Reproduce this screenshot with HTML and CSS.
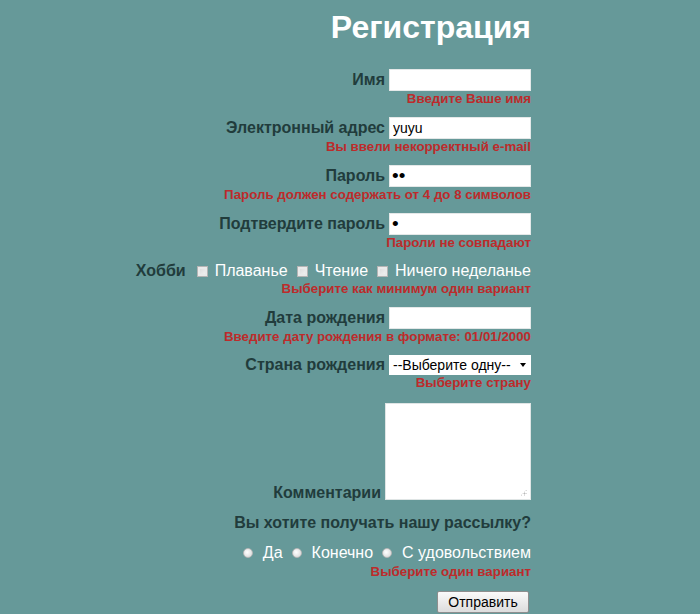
FILE: index.html
```html
<!DOCTYPE html>
<html lang="ru">
<head>
<meta charset="utf-8">
<title>Регистрация</title>
<link rel="stylesheet" href="styles.css">
</head>
<body>
<form class="form">
  <h1 class="title">Регистрация</h1>

  <div class="group">
    <div class="row"><label class="label">Имя</label><input class="field" type="text" value=""></div>
    <div class="error">Введите Ваше имя</div>
  </div>

  <div class="group">
    <div class="row"><label class="label">Электронный адрес</label><input class="field" type="text" value="yuyu"></div>
    <div class="error">Вы ввели некорректный e-mail</div>
  </div>

  <div class="group">
    <div class="row"><label class="label">Пароль</label><input class="field pass" type="password" value="ab"></div>
    <div class="error">Пароль должен содержать от 4 до 8 символов</div>
  </div>

  <div class="group">
    <div class="row"><label class="label">Подтвердите пароль</label><input class="field pass" type="password" value="a"></div>
    <div class="error">Пароли не совпадают</div>
  </div>

  <div class="group">
    <div class="row row-short">
      <span class="label">Хобби</span>
      <input class="check" type="checkbox"><span class="opt">Плаванье</span>
      <input class="check" type="checkbox"><span class="opt">Чтение</span>
      <input class="check" type="checkbox"><span class="opt">Ничего неделанье</span>
    </div>
    <div class="error">Выберите как минимум один вариант</div>
  </div>

  <div class="group">
    <div class="row"><label class="label">Дата рождения</label><input class="field" type="text" value=""></div>
    <div class="error">Введите дату рождения в формате: 01/01/2000</div>
  </div>

  <div class="group">
    <div class="row row-short"><label class="label">Страна рождения</label>
      <div class="select"><span>--Выберите одну--</span><span class="arrow"></span></div>
    </div>
    <div class="error">Выберите страну</div>
  </div>

  <div class="group group-area">
    <div class="row row-area"><label class="label">Комментарии</label>
      <div class="area"><span class="grip"></span></div>
    </div>
  </div>

  <div class="question">Вы хотите получать нашу рассылку?</div>

  <div class="group group-radio">
    <div class="row row-short">
      <input class="radio" type="radio" name="r"><span class="opt">Да</span>
      <input class="radio" type="radio" name="r"><span class="opt">Конечно</span>
      <input class="radio" type="radio" name="r"><span class="opt">С удовольствием</span>
    </div>
    <div class="error error-radio">Выберите один вариант</div>
  </div>

  <button class="submit" type="button">Отправить</button>
</form>
</body>
</html>
```

FILE: styles.css
```css
html, body {
  margin: 0;
  padding: 0;
  background: #669999;
}
body {
  font-family: "Liberation Sans", Arial, sans-serif;
  width: 700px;
  height: 614px;
  overflow: hidden;
}
.form {
  width: 531px;
  display: flex;
  flex-direction: column;
  align-items: flex-end;
}
.title {
  margin: 7px 0 0 0;
  font-size: 32px;
  line-height: 40px;
  font-weight: bold;
  color: #ffffff;
}
.group {
  display: flex;
  flex-direction: column;
  align-items: flex-end;
  margin-top: 11px;
}
.title + .group {
  margin-top: 22px;
}
.row {
  display: flex;
  align-items: center;
  justify-content: flex-end;
  height: 22px;
}
.row-short {
  height: 20px;
}
.label {
  font-size: 16px;
  font-weight: bold;
  color: #213c3c;
  margin-right: 4px;
  white-space: nowrap;
}
.field {
  box-sizing: border-box;
  width: 142px;
  height: 22px;
  margin: 0;
  border: 1px solid #e4e8e8;
  background: #ffffff;
  padding: 0 3px;
  font-family: "Liberation Sans", Arial, sans-serif;
  font-size: 14px;
  color: #000;
  outline: none;
}
.pass {
  font-size: 19px;
  letter-spacing: 0;
  padding-left: 2px;
}
.error {
  font-size: 13.3px;
  line-height: 15px;
  font-weight: bold;
  color: #bd2b2b;
  white-space: nowrap;
}
.error-radio {
  margin-top: 1px;
}
.check {
  appearance: none;
  -webkit-appearance: none;
  box-sizing: border-box;
  width: 11px;
  height: 11px;
  margin: 0 7px 0 9px;
  border: 1px solid #b4b4b4;
  background: linear-gradient(135deg, #d8d8d8, #f6f6f6);
  box-shadow: inset 0 0 0 2px #eaeaea;
}
.row-short .label + .check {
  margin-left: 7px;
}
.opt {
  font-size: 16px;
  color: #ffffff;
  white-space: nowrap;
}
.select {
  box-sizing: border-box;
  width: 142px;
  height: 20px;
  background: #ffffff;
  display: flex;
  align-items: center;
  justify-content: space-between;
  padding: 0 4px 0 4px;
  font-size: 14px;
  color: #000;
}
.arrow {
  width: 0;
  height: 0;
  border-left: 3.5px solid transparent;
  border-right: 3.5px solid transparent;
  border-top: 4px solid #000;
  margin-right: 1px;
}
.group-area {
  margin-top: 13px;
}
.row-area {
  height: 97px;
  align-items: flex-end;
}
.row-area .label {
  line-height: 18px;
  margin-bottom: -2px;
}
.area {
  position: relative;
  box-sizing: border-box;
  width: 146px;
  height: 97px;
  background: #ffffff;
  border: 1px solid #dfe5e5;
}
.grip {
  position: absolute;
  right: 3px;
  bottom: 3px;
  width: 7px;
  height: 7px;
  background:
    radial-gradient(circle, #b8b8b8 0.8px, transparent 1.2px) 0 0 / 3px 3px;
  clip-path: polygon(100% 0, 100% 100%, 0 100%);
}
.question {
  margin-top: 13px;
  font-size: 16px;
  line-height: 20px;
  font-weight: bold;
  color: #213c3c;
  white-space: nowrap;
}
.group-radio {
  margin-top: 10px;
}
.radio {
  appearance: none;
  -webkit-appearance: none;
  box-sizing: border-box;
  width: 10px;
  height: 10px;
  margin: 0 10px 0 9px;
  border-radius: 50%;
  border: 1px solid #b8b8b8;
  background: radial-gradient(circle at 40% 40%, #ffffff, #d4d4d4);
}
.submit {
  margin: 12px 2px 0 0;
  box-sizing: border-box;
  width: 92px;
  height: 22px;
  padding: 0;
  border: 1px solid #8e8e8e;
  border-radius: 2px;
  background: linear-gradient(#fafafa, #dcdcdc);
  font-family: "Liberation Sans", Arial, sans-serif;
  font-size: 14px;
  color: #000;
}
```
